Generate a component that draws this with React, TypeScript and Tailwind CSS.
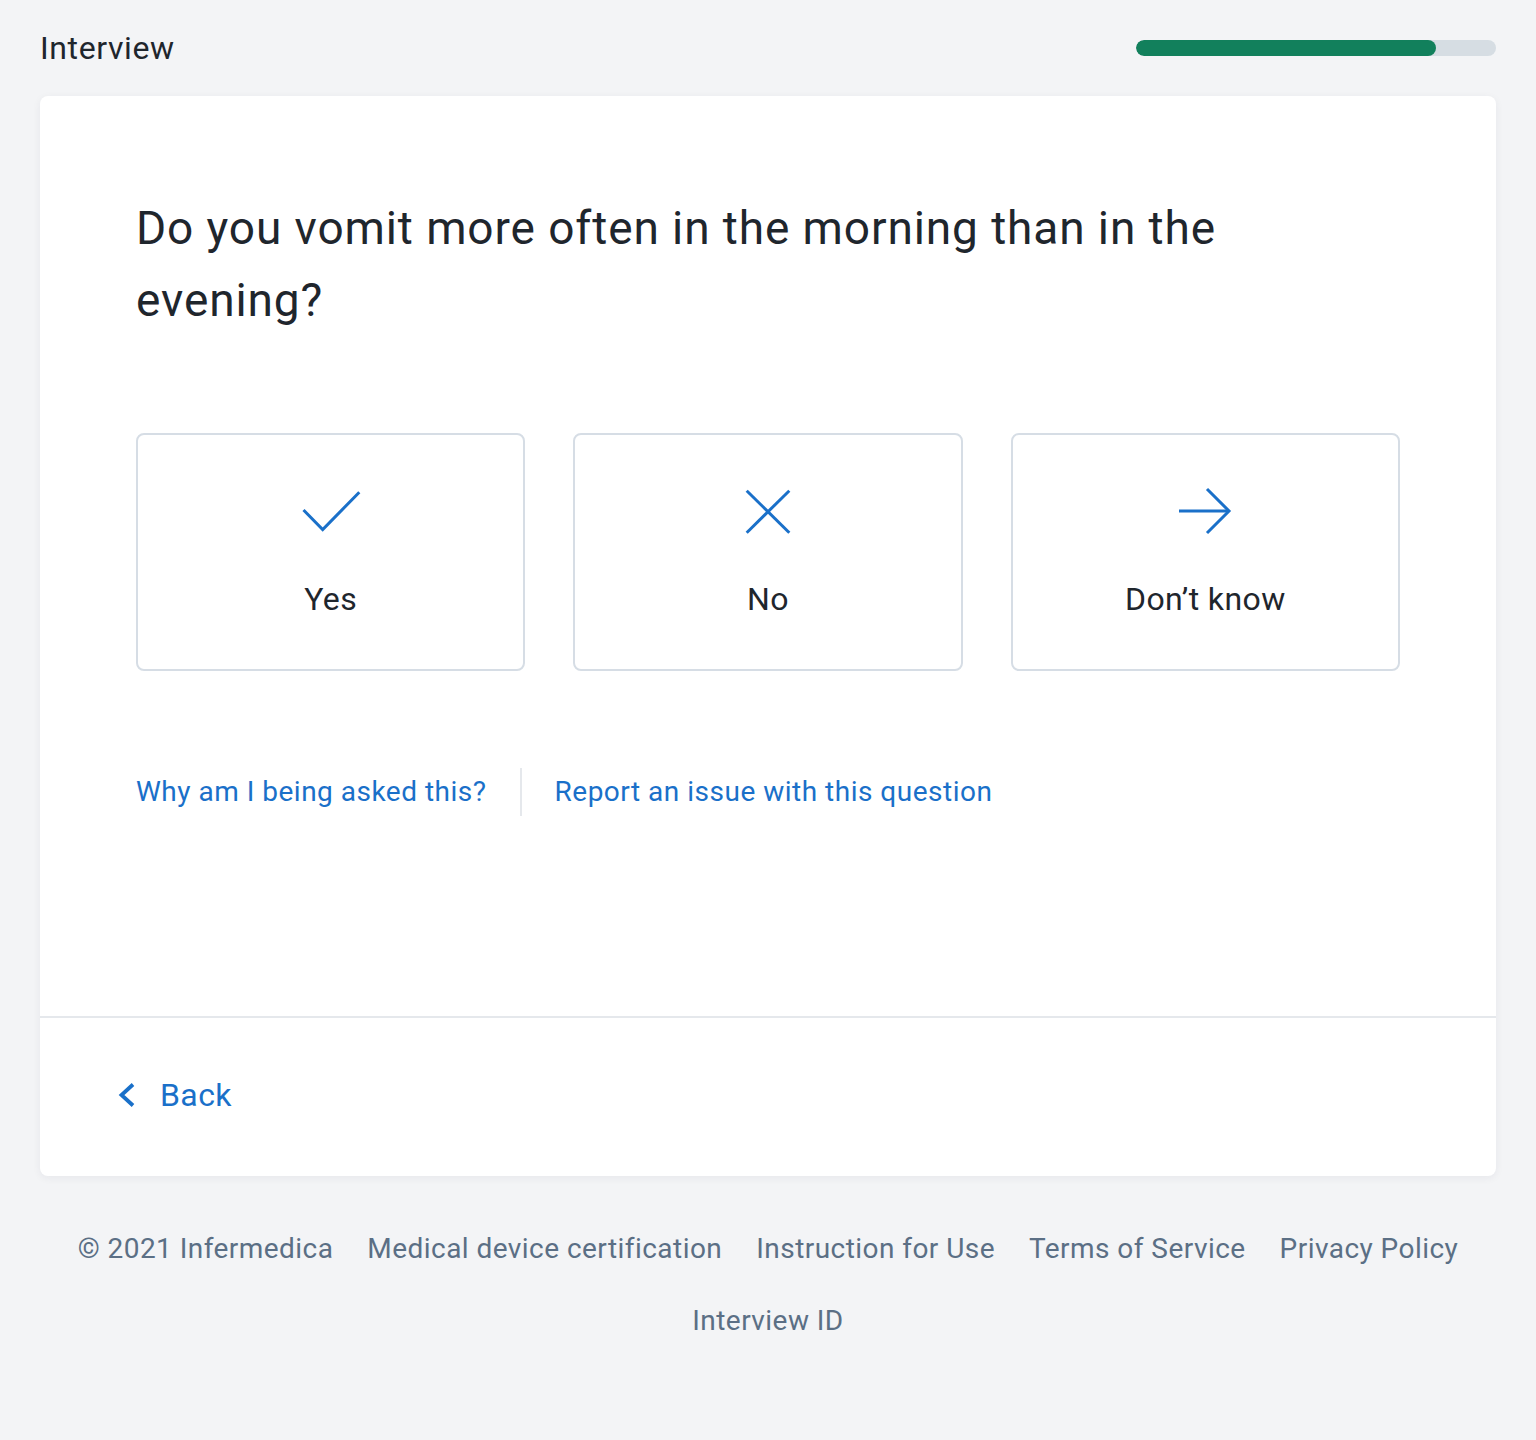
import React from 'react';

const options = [
  { label: 'Yes', icon: 'yes' },
  { label: 'No', icon: 'no' },
  { label: 'Don’t know', icon: 'skip' },
];

const footerLinks = [
  '© 2021 Infermedica',
  'Medical device certification',
  'Instruction for Use',
  'Terms of Service',
  'Privacy Policy',
];

const OptionIcon = ({ kind }: { kind: string }) => (
  <svg
    width="64"
    height="64"
    viewBox="0 0 64 64"
    fill="none"
    stroke="#1a70c9"
    strokeWidth="3"
    strokeLinejoin="miter"
  >
    {kind === 'yes' && <polyline points="4.5,31 23.7,50.5 60.3,13.3" />}
    {kind === 'no' && (
      <>
        <line x1="10.7" y1="11.7" x2="53.3" y2="53.7" />
        <line x1="53.3" y1="11.7" x2="10.7" y2="53.7" />
      </>
    )}
    {kind === 'skip' && (
      <>
        <line x1="6" y1="32" x2="56" y2="32" />
        <polyline points="34,10 56,32 34,54" />
      </>
    )}
  </svg>
);

const App = () => {
  return (
    <div className="min-h-screen bg-[#f3f4f6] font-['Roboto',sans-serif] text-[#1f262d]">
      {/* header */}
      <div className="h-[96px] px-[40px] flex items-center justify-between">
        <h1 className="text-[32px] leading-none tracking-[0.6px]">Interview</h1>
        <div className="w-[360px] h-[16px] rounded-full bg-[#d6dde3] overflow-hidden">
          <div className="h-full w-[300px] rounded-full bg-[#12805c]" />
        </div>
      </div>

      {/* card */}
      <div className="mx-[40px] bg-white rounded-[8px] shadow-[0_2px_8px_rgba(30,40,60,0.06)]">
        <div className="px-[96px] pt-[96px] pb-[200px]">
          <h2 className="text-[46px] leading-[72px] max-w-[1160px] tracking-[0.9px]">
            Do you vomit more often in the morning than in the evening?
          </h2>

          <div className="mt-[97px] grid grid-cols-3 gap-[48px] w-[1264px]">
            {options.map(opt => (
              <button
                key={opt.label}
                className="h-[238px] border-2 border-[#d6dde5] rounded-[8px] bg-white flex flex-col items-center pt-[44px]"
              >
                <OptionIcon kind={opt.icon} />
                <span className="mt-[38px] text-[32px] leading-[36px] tracking-[0.4px]">
                  {opt.label}
                </span>
              </button>
            ))}
          </div>

          <div className="mt-[97px] flex items-center h-[48px] text-[28px] tracking-[0.5px] text-[#1a70c9]">
            <span className="pr-[33px] h-full flex items-center border-r-2 border-[#e5e8ec]">
              Why am I being asked this?
            </span>
            <span className="pl-[33px]">Report an issue with this question</span>
          </div>
        </div>

        <div className="border-t-2 border-[#e5e8ec] h-[160px] flex items-center pl-[76px] pb-[4px]">
          <button className="flex items-center gap-[24px] text-[32px] tracking-[0.4px] text-[#1a70c9]">
            <svg width="20" height="26" viewBox="0 0 20 26" fill="none">
              <polyline
                points="17,2.5 5.5,13 17,23.5"
                stroke="#1a70c9"
                strokeWidth="3.8"
              />
            </svg>
            Back
          </button>
        </div>
      </div>

      {/* footer */}
      <div className="pt-[37px] text-[28px] tracking-[0.45px] text-[#5b6f85]">
        <div className="h-[72px] flex items-center justify-center gap-[34px]">
          {footerLinks.map(link => (
            <span key={link}>{link}</span>
          ))}
        </div>
        <div className="h-[72px] flex items-center justify-center">
          Interview ID
        </div>
      </div>
    </div>
  );
};

export default App;
